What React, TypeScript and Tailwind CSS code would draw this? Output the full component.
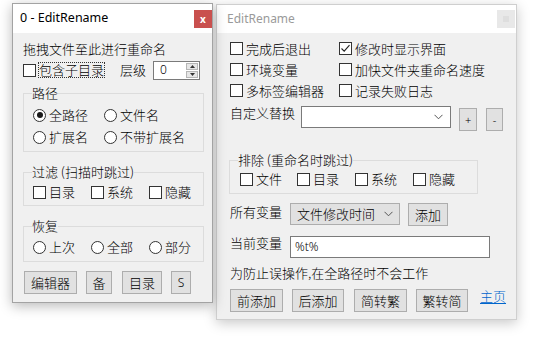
import React from "react";

const CJK = "font-['Noto_Sans_CJK_SC','Noto_Sans',sans-serif] font-light";

function CheckMark() {
	return (
		<svg width="11" height="11" viewBox="0 0 11 11">
			<path d="M1.5 5.5 L4.2 8.2 L9.5 2.2" fill="none" stroke="#222" strokeWidth="1.1" />
		</svg>
	);
}

function Check({ label, checked = false, className = "" }: { label: string; checked?: boolean; className?: string }) {
	return (
		<div className={`flex items-center ${className}`}>
			<span className="w-[13px] h-[13px] shrink-0 border border-[#333] bg-white flex items-center justify-center">
				{checked && <CheckMark />}
			</span>
			<span className="ml-[3px] whitespace-nowrap">{label}</span>
		</div>
	);
}

function Radio({ label, selected = false, className = "" }: { label: string; selected?: boolean; className?: string }) {
	return (
		<div className={`flex items-center ${className}`}>
			<span className="w-[13px] h-[13px] shrink-0 rounded-full border border-[#333] bg-white flex items-center justify-center">
				{selected && <span className="w-[6px] h-[6px] rounded-full bg-[#1a1a1a]" />}
			</span>
			<span className="ml-[3px] whitespace-nowrap">{label}</span>
		</div>
	);
}

function Btn({ label, className = "" }: { label: string; className?: string }) {
	return (
		<div
			className={`h-[23px] bg-[#e1e1e1] border border-[#adadad] flex items-center justify-center whitespace-nowrap ${className}`}
		>
			{label}
		</div>
	);
}

function Chevron() {
	return (
		<svg width="9" height="6" viewBox="0 0 9 6">
			<path d="M0.5 0.8 L4.5 4.8 L8.5 0.8" fill="none" stroke="#555" strokeWidth="1" />
		</svg>
	);
}

function LeftWindow() {
	return (
		<div className="absolute left-[12px] top-[3px] w-[201px] h-[300px] flex flex-col border border-[#a3a3a3] bg-[#f0f0f0] shadow-[0_3px_12px_rgba(0,0,0,0.28)]">
			<div className="h-[29px] bg-white flex items-center justify-between pl-[7px] pr-[0px]">
				<span className="font-['Noto_Sans',sans-serif] text-[12.5px] text-black">0 - EditRename</span>
				<div className="w-[18px] h-[18px] bg-[#c9504e] flex items-center justify-center text-white text-[10px] leading-none font-['Noto_Sans',sans-serif] font-bold">
					x
				</div>
			</div>
			<div className={`flex flex-col pl-[10px] pr-[8px] text-[13px] leading-[16px] text-black ${CJK}`}>
				<div className="mt-[8px] h-[16px]">拖拽文件至此进行重命名</div>
				<div className="mt-[3px] h-[20px] flex items-center">
					<span className="w-[13px] h-[13px] border border-[#333] bg-white" />
					<span className="ml-[2px] w-[67px] h-[16px] border border-dotted border-[#333] flex items-center justify-center">
						包含子目录
					</span>
					<span className="ml-[15px]">层级</span>
					<div className="ml-[7px] w-[47px] h-[19px] bg-white border border-[#7a7a7a] flex items-center">
						<span className="pl-[6px] flex-1 font-['Noto_Sans',sans-serif] text-[12px]">0</span>
						<div className="w-[12px] h-[15px] mr-[1px] flex flex-col gap-[1px]">
							<div className="flex-1 bg-[#e6e6e6] border border-[#b5b5b5] flex items-center justify-center">
								<svg width="5" height="3" viewBox="0 0 5 3">
									<path d="M0 3 L2.5 0 L5 3 Z" fill="#333" />
								</svg>
							</div>
							<div className="flex-1 bg-[#e6e6e6] border border-[#b5b5b5] flex items-center justify-center">
								<svg width="5" height="3" viewBox="0 0 5 3">
									<path d="M0 0 L2.5 3 L5 0 Z" fill="#333" />
								</svg>
							</div>
						</div>
					</div>
				</div>

				<fieldset className="mt-[5px] border border-[#dcdcdc] pl-[9px] pb-[4px]">
					<legend className="ml-[-1px] px-0 leading-[16px]">路径</legend>
					<div className="mt-[4px] h-[20px] flex">
						<Radio label="全路径" selected className="w-[71px]" />
						<Radio label="文件名" />
					</div>
					<div className="mt-[2px] h-[20px] flex">
						<Radio label="扩展名" className="w-[71px]" />
						<Radio label="不带扩展名" />
					</div>
				</fieldset>

				<fieldset className="mt-[12px] border border-[#dcdcdc] pl-[9px] pb-[3px]">
					<legend className="ml-[-1px] px-0 leading-[16px]">过滤 (扫描时跳过)</legend>
					<div className="mt-[2px] h-[20px] flex">
						<Check label="目录" className="w-[58px]" />
						<Check label="系统" className="w-[58px]" />
						<Check label="隐藏" />
					</div>
				</fieldset>

				<fieldset className="mt-[12px] border border-[#dcdcdc] pl-[9px] pb-[4px]">
					<legend className="ml-[-1px] px-0 leading-[16px]">恢复</legend>
					<div className="mt-[3px] h-[20px] flex">
						<Radio label="上次" className="w-[58px]" />
						<Radio label="全部" className="w-[58px]" />
						<Radio label="部分" />
					</div>
				</fieldset>

				<div className="mt-[9px] ml-[1px] flex">
					<Btn label="编辑器" className="w-[53px]" />
					<Btn label="备" className="w-[26px] ml-[9px]" />
					<Btn label="目录" className="w-[40px] ml-[10px]" />
					<Btn label="S" className="w-[20px] ml-[9px] font-['Noto_Sans',sans-serif] text-[12px]" />
				</div>
			</div>
		</div>
	);
}

function RightWindow() {
	return (
		<div className="absolute left-[216px] top-[4px] w-[301px] h-[316px] flex flex-col border border-[#cfcfcf] bg-[#f0f0f0] shadow-[0_3px_12px_rgba(0,0,0,0.22)]">
			<div className="h-[28px] bg-white flex items-center justify-between pl-[10px] pr-[1px]">
				<span className="font-['Noto_Sans',sans-serif] text-[12px] text-[#9a9a9a]">EditRename</span>
				<div className="w-[18px] h-[18px] bg-[#e8e8e8] flex items-center justify-center">
					<span className="w-[6px] h-[6px] bg-[#dedede]" />
				</div>
			</div>
			<div className={`flex flex-col pl-[13px] text-[13px] leading-[16px] text-black ${CJK}`}>
				<div className="mt-[5px] grid grid-cols-[109px_1fr] auto-rows-[21px]">
					<Check label="完成后退出" />
					<Check label="修改时显示界面" checked />
					<Check label="环境变量" />
					<Check label="加快文件夹重命名速度" />
					<Check label="多标签编辑器" />
					<Check label="记录失败日志" />
				</div>

				<div className="mt-[4px] flex items-start">
					<span className="h-[16px]">自定义替换</span>
					<div className="ml-[6px] mt-[1px] w-[150px] h-[22px] bg-white border border-[#7a7a7a] flex items-center justify-end pr-[7px]">
						<Chevron />
					</div>
					<div className="ml-[8px] mt-[3px] w-[18px] h-[23px] bg-[#e1e1e1] border border-[#adadad] flex items-center justify-center font-['Noto_Sans',sans-serif] text-[11px]">
						+
					</div>
					<div className="ml-[9px] mt-[3px] w-[17px] h-[23px] bg-[#e1e1e1] border border-[#adadad] flex items-center justify-center font-['Noto_Sans',sans-serif] text-[11px]">
						-
					</div>
				</div>

				<fieldset className="mt-[21px] ml-[-1px] w-[249px] border border-[#dcdcdc] pl-[10px] pb-[4px]">
					<legend className="ml-[-2px] px-0 leading-[16px]">排除 (重命名时跳过)</legend>
					<div className="mt-[1px] h-[20px] flex">
						<Check label="文件" className="w-[57px]" />
						<Check label="目录" className="w-[58px]" />
						<Check label="系统" className="w-[58px]" />
						<Check label="隐藏" />
					</div>
				</fieldset>

				<div className="mt-[9px] flex items-start">
					<span className="mt-[1px] h-[16px]">所有变量</span>
					<div className="ml-[8px] w-[110px] h-[22px] bg-[#e1e1e1] border border-[#adadad] flex items-center justify-between pl-[6px] pr-[6px]">
						<span>文件修改时间</span>
						<Chevron />
					</div>
					<Btn label="添加" className="ml-[8px] w-[40px]" />
				</div>

				<div className="mt-[9px] flex items-start">
					<span className="h-[16px]">当前变量</span>
					<div className="ml-[8px] mt-[1px] w-[200px] h-[22px] bg-white border border-[#7a7a7a] flex items-center pl-[4px] font-['Noto_Sans',sans-serif] text-[12px]">
						%t%
					</div>
				</div>

				<div className="mt-[7px] h-[16px]">为防止误操作,在全路径时不会工作</div>

				<div className="mt-[8px] flex items-start">
					<Btn label="前添加" className="w-[53px]" />
					<Btn label="后添加" className="w-[52px] ml-[9px]" />
					<Btn label="简转繁" className="w-[53px] ml-[10px]" />
					<Btn label="繁转简" className="w-[52px] ml-[9px]" />
					<span className="ml-[12px] mt-[-1px] text-[#0066cc] underline underline-offset-2">主页</span>
				</div>
			</div>
		</div>
	);
}

export default function App() {
	return (
		<div className="relative w-[542px] h-[337px] bg-white overflow-hidden">
			<RightWindow />
			<LeftWindow />
		</div>
	);
}
